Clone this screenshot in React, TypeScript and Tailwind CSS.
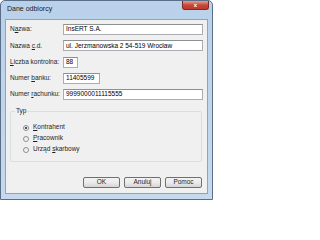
import React from 'react';

const font = { fontFamily: '"Liberation Sans", Arial, sans-serif' };

function Pole({ label, value, width }: { label: React.ReactNode; value: string; width: string }) {
  return (
    <div className="flex items-center h-[11px]">
      <div className="w-[53px] text-[6.5px] text-[#1e1e1e] leading-none whitespace-nowrap">{label}</div>
      <div className={`${width} h-[11px] bg-white border border-[#abadb3] border-t-[#8e8f8f] flex items-center pl-[2px] text-[6.5px] leading-none text-black whitespace-nowrap overflow-hidden`}>
        {value}
      </div>
    </div>
  );
}

function Radio({ checked, children }: { checked?: boolean; children: React.ReactNode }) {
  return (
    <div className="flex items-center h-[11px]">
      <span className="w-[6px] h-[6px] rounded-full border border-[#8e8f8f] bg-gradient-to-br from-[#e6e6e6] to-white flex items-center justify-center">
        {checked && <span className="w-[2px] h-[2px] rounded-full bg-[#1a1a1a]" />}
      </span>
      <span className="ml-[4px] text-[6.5px] leading-none text-[#1e1e1e]">{children}</span>
    </div>
  );
}

function Przycisk({ children }: { children: React.ReactNode }) {
  return (
    <div className="w-[37px] h-[11px] rounded-[2px] border border-[#707070] bg-gradient-to-b from-[#f2f2f2] via-[#ebebeb] to-[#d5d5d5] flex items-center justify-center text-[6.5px] leading-none text-[#1e1e1e]">
      {children}
    </div>
  );
}

export default function App() {
  return (
    <div style={font} className="w-[213px] h-[200px] bg-gradient-to-b from-[#b9d1ea] to-[#c6d9ee] border border-[#5a6f87] rounded-t-[5px] flex flex-col overflow-hidden">
      <div className="h-[18px] flex items-start justify-between shrink-0">
        <span className="ml-[6px] mt-[4px] text-[7px] leading-none text-[#1a1a1a]">Dane odbiorcy</span>
        <div className="mr-[3px] w-[27px] h-[9px] rounded-b-[3px] border border-[#7b2b24] border-t-0 bg-gradient-to-b from-[#e0a197] via-[#c8463a] to-[#c0392b] flex items-center justify-center text-white text-[6px] font-bold leading-none">
          x
        </div>
      </div>
      <div className="mx-[4px] h-[175px] bg-[#f0f0f0] border border-[#8ea4bd] flex flex-col px-[4px] pt-[4px]">
        <div className="flex flex-col gap-[5.3px]">
          <Pole label={<>N<u>a</u>zwa:</>} value="InsERT S.A." width="w-[140px]" />
          <Pole label={<>Nazwa <u>c</u>.d.</>} value="ul. Jerzmanowska 2 54-519 Wrocław" width="w-[140px]" />
          <Pole label={<><u>L</u>iczba kontrolna:</>} value="88" width="w-[15px]" />
          <Pole label={<>Numer <u>b</u>anku:</>} value="11405599" width="w-[37px]" />
          <Pole label={<>Numer <u>r</u>achunku:</>} value="9999000011115555" width="w-[140px]" />
        </div>
        <div className="mt-[11px] w-[192px] h-[51px] border border-[#d5dfe5] rounded-[2px] relative pl-[12px] pt-[10px] flex flex-col">
          <span className="absolute left-[4px] top-[-4px] bg-[#f0f0f0] px-[1px] text-[6.5px] leading-none text-[#1e1e1e]">Typ</span>
          <Radio checked><u>K</u>ontrahent</Radio>
          <Radio><u>P</u>racownik</Radio>
          <Radio>Urząd <u>s</u>karbowy</Radio>
        </div>
        <div className="mt-[15px] flex justify-end gap-[4px] pr-[1px]">
          <Przycisk>OK</Przycisk>
          <Przycisk>Anuluj</Przycisk>
          <Przycisk>Pomoc</Przycisk>
        </div>
      </div>
    </div>
  );
}
